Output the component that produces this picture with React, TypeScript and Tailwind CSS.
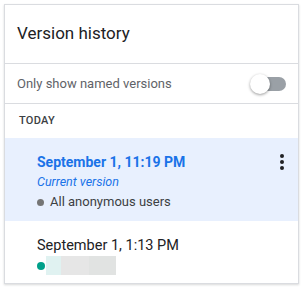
export default function App() {
  return (
    <div className="h-[289px] w-[303px] bg-white p-1" style={{ fontFamily: "Roboto, 'Noto Sans', sans-serif" }}>
      <div className="flex h-[280px] w-[295px] flex-col overflow-hidden border border-[#dadce0] bg-white shadow-[0_1px_2px_rgba(60,64,67,0.2)]">
        <div className="flex h-[59px] shrink-0 items-center border-b border-[#dadce0] px-3">
          <h1 className="text-[17px] text-[#202124]">Version history</h1>
        </div>
        <div className="flex h-[40px] shrink-0 items-center justify-between border-b border-[#dadce0] pl-3 pr-3">
          <span className="text-[13px] text-[#5f6368]">Only show named versions</span>
          <div className="relative h-[14px] w-[36px]">
            <div className="absolute right-0 top-0 h-[14px] w-[30px] rounded-full bg-[#9aa0a6]" />
            <div className="absolute -top-[3px] left-0 h-5 w-5 rounded-full bg-white shadow-[0_1px_3px_rgba(0,0,0,0.4)]" />
          </div>
        </div>
        <div className="flex h-[34px] shrink-0 items-center px-[14px]">
          <span className="text-[11px] font-medium uppercase tracking-wide text-[#3c4043]">Today</span>
        </div>
        <div className="relative h-[83px] shrink-0 bg-[#e8f0fe] pl-8 pr-3 pt-[14px]">
          <div className="text-[14px] font-bold leading-5 text-[#1a73e8]">September 1, 11:19 PM</div>
          <div className="text-[12.5px] italic leading-5 text-[#1a73e8]">Current version</div>
          <div className="flex items-center gap-[6px] text-[13px] leading-5 text-[#3c4043]">
            <span className="h-[7px] w-[7px] rounded-full bg-[#757575]" />
            All anonymous users
          </div>
          <div className="absolute right-[14px] top-[16px] flex flex-col gap-[2px]">
            <span className="h-1 w-1 rounded-full bg-[#202124]" />
            <span className="h-1 w-1 rounded-full bg-[#202124]" />
            <span className="h-1 w-1 rounded-full bg-[#202124]" />
          </div>
        </div>
        <div className="flex-1 pl-8 pr-3 pt-[15px]">
          <div className="text-[14.5px] leading-5 text-[#202124]">September 1, 1:13 PM</div>
          <div className="flex items-center">
            <span className="h-[8px] w-[8px] rounded-full bg-[#00a08a]" />
            <span className="ml-[1px] h-[19px] w-[15px] bg-[#e0f2f1]" />
            <span className="h-[19px] w-[28px] bg-[#e6e6e6]" />
            <span className="h-[19px] w-[27px] bg-[#e1e3e2]" />
          </div>
        </div>
      </div>
    </div>
  );
}
